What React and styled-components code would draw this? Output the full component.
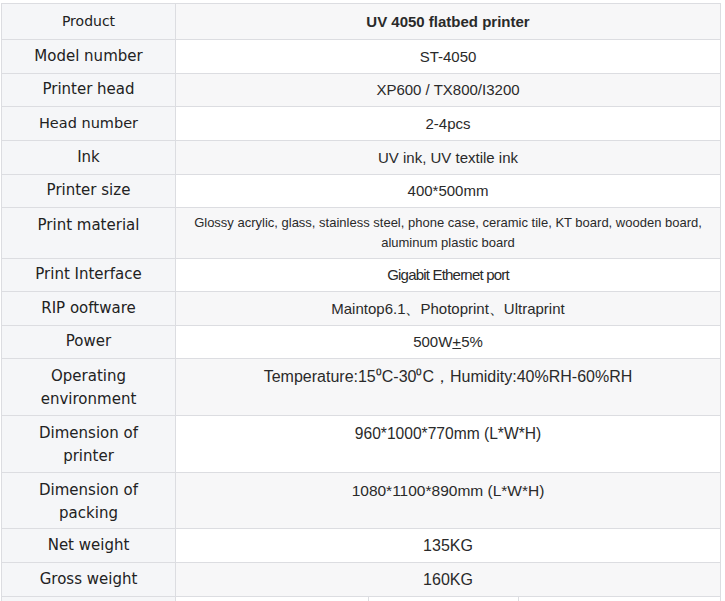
import React from 'react';
import styled, { createGlobalStyle } from 'styled-components';

const GlobalStyle = createGlobalStyle`
  html, body {
    margin: 0;
    padding: 0;
    background: #ffffff;
  }
  body {
    font-family: "Liberation Sans", Arial, sans-serif;
    color: #333;
  }
`;

const Page = styled.div`
  padding: 3px 0 0 1px;
  height: 601px;
  overflow: hidden;
  box-sizing: border-box;
`;

const Table = styled.table`
  width: 720px;
  border-collapse: collapse;
  table-layout: fixed;
`;

const Row = styled.tr`
  height: ${p => p.h}px;
`;

const LabelCell = styled.td`
  width: 174px;
  box-sizing: border-box;
  border: 1px solid #dcdde1;
  background: #f5f6f8;
  padding: ${p => (p.tall ? '6px 6px 0' : '0 6px 1px')};
  text-align: center;
  vertical-align: ${p => (p.tall ? 'top' : 'middle')};
  font-family: "DejaVu Sans", Verdana, sans-serif;
  font-size: ${p => p.size || 15}px;
  line-height: 23px;
  color: #222;
`;

const ValueCell = styled.td`
  box-sizing: border-box;
  border: 1px solid #dcdde1;
  background: ${p => (p.shade ? '#f7f7f8' : '#ffffff')};
  padding: ${p => (p.tall ? `${p.pad || 6}px 8px 0` : '0 8px 1px')};
  text-align: center;
  vertical-align: ${p => (p.tall ? 'top' : 'middle')};
  font-family: "Liberation Sans", Arial, sans-serif;
  font-size: ${p => p.size || 15}px;
  font-weight: ${p => (p.bold ? 700 : 400)};
  letter-spacing: ${p => p.ls || 0}px;
  line-height: ${p => p.lh || 23}px;
  color: #2a2a2a;
`;

const Plus = styled.span`
  text-decoration: underline;
`;

const rows = [
  { label: 'Product', labelSize: 14, value: 'UV 4050 flatbed printer', bold: true, h: 36, size: 15 },
  { label: 'Model number', value: 'ST-4050', h: 34 },
  { label: 'Printer head', value: 'XP600 / TX800/I3200', h: 33 },
  { label: 'Head number', labelSize: 14.5, value: '2-4pcs', h: 34 },
  { label: 'Ink', value: 'UV ink, UV textile ink', h: 34 },
  { label: 'Printer size', value: '400*500mm', h: 33 },
  {
    label: 'Print material',
    value: 'Glossy acrylic, glass, stainless steel, phone case, ceramic tile, KT board, wooden board, aluminum plastic board',
    size: 13, lh: 20, pad: 5, h: 51, tall: true,
  },
  { label: 'Print Interface', value: 'Gigabit Ethernet port', size: 15, ls: -0.8, h: 33 },
  { label: 'RIP ooftware', value: 'Maintop6.1、Photoprint、Ultraprint', h: 34 },
  { label: 'Power', value: 'power', h: 33 },
  { label: 'Operating environment', value: 'Temperature:15⁰C-30⁰C，Humidity:40%RH-60%RH', size: 16, h: 57, tall: true },
  { label: 'Dimension of printer', value: '960*1000*770mm (L*W*H)', size: 15.6, h: 57, tall: true },
  { label: 'Dimension of packing', value: '1080*1100*890mm (L*W*H)', size: 15.5, h: 56, tall: true },
  { label: 'Net weight', value: '135KG', size: 16, h: 34 },
  { label: 'Gross weight', value: '160KG', size: 16, h: 34 },
];

const labelLines = {
  'Operating environment': ['Operating', 'environment'],
  'Dimension of printer': ['Dimension of', 'printer'],
  'Dimension of packing': ['Dimension of', 'packing'],
};

function renderLabel(label) {
  const lines = labelLines[label];
  if (!lines) return label;
  return (
    <>
      {lines[0]}
      <br />
      {lines[1]}
    </>
  );
}

function renderValue(r) {
  if (r.value === 'power') {
    return (
      <>
        500W<Plus>+</Plus>5%
      </>
    );
  }
  return r.value;
}

export default function App() {
  return (
    <>
      <GlobalStyle />
      <Page>
        <Table>
          <colgroup>
            <col style={{ width: 174 }} />
            <col style={{ width: 193 }} />
            <col style={{ width: 150 }} />
            <col />
          </colgroup>
          <tbody>
            {rows.map((r, i) => (
              <Row key={r.label} h={r.h}>
                <LabelCell size={r.labelSize} tall={r.tall}>
                  {renderLabel(r.label)}
                </LabelCell>
                <ValueCell
                  colSpan={3}
                  shade={i % 2 === 0}
                  bold={r.bold}
                  size={r.size}
                  lh={r.lh}
                  ls={r.ls}
                  pad={r.pad}
                  tall={r.tall}
                >
                  {renderValue(r)}
                </ValueCell>
              </Row>
            ))}
            <Row h={34}>
              <LabelCell />
              <ValueCell />
              <ValueCell />
              <ValueCell />
            </Row>
          </tbody>
        </Table>
      </Page>
    </>
  );
}
